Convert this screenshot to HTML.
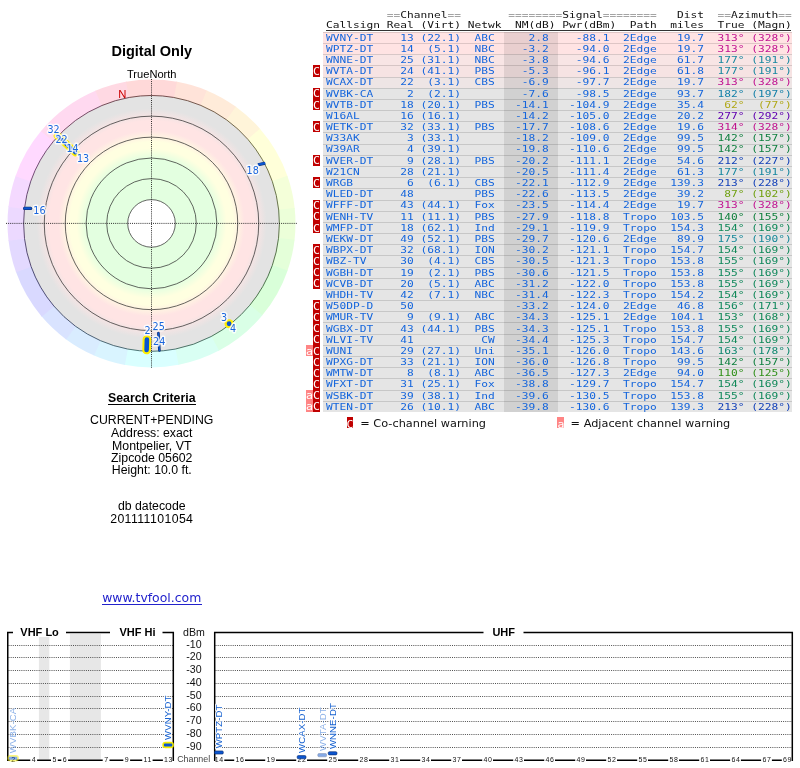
<!DOCTYPE html>
<html><head><meta charset="utf-8"><title>TV Fool - Digital Only</title>
<style>
html,body{margin:0;padding:0;background:#fff;}
body{width:800px;height:768px;position:relative;overflow:hidden;font-family:"Liberation Sans",sans-serif;color:#000;}
.c{position:absolute;text-align:center;white-space:nowrap;left:0;width:303.5px;}
.rb{position:absolute;left:323.4px;width:468.6px;border-top:1px solid rgba(0,0,0,0.13);box-sizing:border-box;}
.t{position:absolute;margin:0;left:326.00px;font-family:"DejaVu Sans Mono","Liberation Mono",monospace;font-size:11.20px;letter-spacing:0.0141px;line-height:13.000px;height:13.000px;white-space:pre;transform-origin:0 0;transform:scale(1,0.855);color:#1465dc;}
.hd{color:#111;}
.mk{position:absolute;width:7.2px;color:#fff;font-family:"DejaVu Sans Mono","Liberation Mono",monospace;font-size:11.5px;text-align:center;overflow:hidden;}
.mk span{display:block;position:relative;top:0.7px;line-height:13px;height:13px;transform-origin:50% 0;transform:scale(1,0.86);}
.mk.l span{top:2.2px;}
.C{background:#c00000;}
.a{background:#ff8585;}
.lg{position:absolute;font-family:"DejaVu Sans","Liberation Sans",sans-serif;font-size:11.3px;white-space:nowrap;color:#111;}
</style></head><body>
<div id="w" style="position:absolute;left:0;top:0;width:800px;height:768px;overflow:hidden;will-change:transform;">
<div class="c" style="top:42.6px;font-size:14.5px;font-weight:bold;">Digital Only</div>
<div class="c" style="top:67.9px;font-size:11.1px;">TrueNorth</div>
<div class="c" style="top:391.3px;font-size:12.3px;font-weight:bold;">Search Criteria</div>
<div style="position:absolute;left:108px;top:404.3px;width:87.5px;height:1.2px;background:#000;"></div>
<div class="c" style="top:413.05px;font-size:12.3px;line-height:14px;">CURRENT+PENDING</div>
<div class="c" style="top:426.30px;font-size:12.3px;line-height:14px;">Address: exact</div>
<div class="c" style="top:438.55px;font-size:12.3px;line-height:14px;">Montpelier, VT</div>
<div class="c" style="top:450.55px;font-size:12.3px;line-height:14px;">Zipcode 05602</div>
<div class="c" style="top:463.05px;font-size:12.3px;line-height:14px;">Height: 10.0 ft.</div>
<div class="c" style="top:498.80px;font-size:12.3px;line-height:14px;">db datecode</div>
<div class="c" style="top:511.80px;font-size:12.3px;line-height:14px;letter-spacing:0.4px;">201111101054</div>
<div class="c" style="top:589.6px;font-family:'DejaVu Sans','Liberation Sans',sans-serif;font-size:12.45px;color:#2222cc;">www.tvfool.com</div>
<div style="position:absolute;left:102.2px;top:603.7px;width:99.5px;height:1px;background:#2222cc;"></div>
<pre class="t hd" style="top:8.93px;">         <span style="color:#8a8a8a">==</span>Channel<span style="color:#8a8a8a">==</span>       <span style="color:#8a8a8a">========</span>Signal<span style="color:#8a8a8a">========</span>   Dist  <span style="color:#8a8a8a">==</span>Azimuth<span style="color:#8a8a8a">==</span></pre>
<pre class="t hd" style="top:19.23px;">Callsign Real (Virt) Netwk  NM(dB) Pwr(dBm)  Path  miles  True (Magn)</pre>
<div style="position:absolute;left:326px;top:29.7px;width:465px;height:1px;background:#333;"></div>
<div class="rb" style="top:31.80px;height:11.23px;background:#ffe3e3;"></div>
<div class="rb" style="top:42.98px;height:11.23px;background:#ffe3e3;"></div>
<div class="rb" style="top:54.16px;height:11.23px;background:#f8e5e5;"></div>
<div class="rb" style="top:65.34px;height:11.23px;background:#f6e3e3;"></div>
<div class="rb" style="top:76.52px;height:11.23px;background:#eee5e5;"></div>
<div class="rb" style="top:87.70px;height:11.23px;background:#e5e5e5;"></div>
<div class="rb" style="top:98.88px;height:11.23px;background:#e5e5e5;"></div>
<div class="rb" style="top:110.06px;height:11.23px;background:#e5e5e5;"></div>
<div class="rb" style="top:121.24px;height:11.23px;background:#e5e5e5;"></div>
<div class="rb" style="top:132.42px;height:11.23px;background:#e5e5e5;"></div>
<div class="rb" style="top:143.60px;height:11.23px;background:#e5e5e5;"></div>
<div class="rb" style="top:154.78px;height:11.23px;background:#e5e5e5;"></div>
<div class="rb" style="top:165.96px;height:11.23px;background:#e5e5e5;"></div>
<div class="rb" style="top:177.14px;height:11.23px;background:#e5e5e5;"></div>
<div class="rb" style="top:188.32px;height:11.23px;background:#e5e5e5;"></div>
<div class="rb" style="top:199.50px;height:11.23px;background:#e5e5e5;"></div>
<div class="rb" style="top:210.68px;height:11.23px;background:#e5e5e5;"></div>
<div class="rb" style="top:221.86px;height:11.23px;background:#e5e5e5;"></div>
<div class="rb" style="top:233.04px;height:11.23px;background:#e5e5e5;"></div>
<div class="rb" style="top:244.22px;height:11.23px;background:#e5e5e5;"></div>
<div class="rb" style="top:255.40px;height:11.23px;background:#e5e5e5;"></div>
<div class="rb" style="top:266.58px;height:11.23px;background:#e5e5e5;"></div>
<div class="rb" style="top:277.76px;height:11.23px;background:#e5e5e5;"></div>
<div class="rb" style="top:288.94px;height:11.23px;background:#e5e5e5;"></div>
<div class="rb" style="top:300.12px;height:11.23px;background:#e5e5e5;"></div>
<div class="rb" style="top:311.30px;height:11.23px;background:#e5e5e5;"></div>
<div class="rb" style="top:322.48px;height:11.23px;background:#e5e5e5;"></div>
<div class="rb" style="top:333.66px;height:11.23px;background:#e5e5e5;"></div>
<div class="rb" style="top:344.84px;height:11.23px;background:#e5e5e5;"></div>
<div class="rb" style="top:356.02px;height:11.23px;background:#e5e5e5;"></div>
<div class="rb" style="top:367.20px;height:11.23px;background:#e5e5e5;"></div>
<div class="rb" style="top:378.38px;height:11.23px;background:#e5e5e5;"></div>
<div class="rb" style="top:389.56px;height:11.23px;background:#e5e5e5;"></div>
<div class="rb" style="top:400.74px;height:11.23px;background:#e5e5e5;"></div>
<div style="position:absolute;left:504px;top:31.80px;width:53.7px;height:380.12px;background:rgba(0,0,0,0.085);"></div>
<pre class="t" style="top:31.58px;">WVNY-DT    13 (22.1)  ABC     2.8    -88.1  2Edge   19.7  <span style="color:#c01090">313° (328°)</span></pre>
<pre class="t" style="top:42.77px;">WPTZ-DT    14  (5.1)  NBC    -3.2    -94.0  2Edge   19.7  <span style="color:#c01090">313° (328°)</span></pre>
<pre class="t" style="top:53.96px;">WNNE-DT    25 (31.1)  NBC    -3.8    -94.6  2Edge   61.7  <span style="color:#1888a0">177° (191°)</span></pre>
<pre class="t" style="top:65.15px;">WVTA-DT    24 (41.1)  PBS    -5.3    -96.1  2Edge   61.8  <span style="color:#1888a0">177° (191°)</span></pre>
<div class="mk C" style="left:312.8px;top:65.34px;height:11.23px;"><span>C</span></div>
<pre class="t" style="top:76.34px;">WCAX-DT    22  (3.1)  CBS    -6.9    -97.7  2Edge   19.7  <span style="color:#c01090">313° (328°)</span></pre>
<pre class="t" style="top:87.53px;">WVBK-CA     2  (2.1)         -7.6    -98.5  2Edge   93.7  <span style="color:#1480a8">182° (197°)</span></pre>
<div class="mk C" style="left:312.8px;top:87.70px;height:11.23px;"><span>C</span></div>
<pre class="t" style="top:98.72px;">WVTB-DT    18 (20.1)  PBS   -14.1   -104.9  2Edge   35.4  <span style="color:#b0a818"> 62°  (77°)</span></pre>
<div class="mk C" style="left:312.8px;top:98.88px;height:11.23px;"><span>C</span></div>
<pre class="t" style="top:109.91px;">W16AL      16 (16.1)        -14.2   -105.0  2Edge   20.2  <span style="color:#6000b0">277° (292°)</span></pre>
<pre class="t" style="top:121.10px;">WETK-DT    32 (33.1)  PBS   -17.7   -108.6  2Edge   19.6  <span style="color:#c0108d">314° (328°)</span></pre>
<div class="mk C" style="left:312.8px;top:121.24px;height:11.23px;"><span>C</span></div>
<pre class="t" style="top:132.29px;">W33AK       3 (33.1)        -18.2   -109.0  2Edge   99.5  <span style="color:#108040">142° (157°)</span></pre>
<pre class="t" style="top:143.48px;">W39AR       4 (39.1)        -19.8   -110.6  2Edge   99.5  <span style="color:#108040">142° (157°)</span></pre>
<pre class="t" style="top:154.67px;">WVER-DT     9 (28.1)  PBS   -20.2   -111.1  2Edge   54.6  <span style="color:#1040b8">212° (227°)</span></pre>
<div class="mk C" style="left:312.8px;top:154.78px;height:11.23px;"><span>C</span></div>
<pre class="t" style="top:165.86px;">W21CN      28 (21.1)        -20.5   -111.4  2Edge   61.3  <span style="color:#1888a0">177° (191°)</span></pre>
<pre class="t" style="top:177.05px;">WRGB        6  (6.1)  CBS   -22.1   -112.9  2Edge  139.3  <span style="color:#113fb8">213° (228°)</span></pre>
<div class="mk C" style="left:312.8px;top:177.14px;height:11.23px;"><span>C</span></div>
<pre class="t" style="top:188.24px;">WLED-DT    48         PBS   -22.6   -113.5  2Edge   39.2  <span style="color:#70a010"> 87° (102°)</span></pre>
<pre class="t" style="top:199.43px;">WFFF-DT    43 (44.1)  Fox   -23.5   -114.4  2Edge   19.7  <span style="color:#c01090">313° (328°)</span></pre>
<div class="mk C" style="left:312.8px;top:199.50px;height:11.23px;"><span>C</span></div>
<pre class="t" style="top:210.62px;">WENH-TV    11 (11.1)  PBS   -27.9   -118.8  Tropo  103.5  <span style="color:#12813e">140° (155°)</span></pre>
<div class="mk C" style="left:312.8px;top:210.68px;height:11.23px;"><span>C</span></div>
<pre class="t" style="top:221.81px;">WMFP-DT    18 (62.1)  Ind   -29.1   -119.9  Tropo  154.3  <span style="color:#108858">154° (169°)</span></pre>
<div class="mk C" style="left:312.8px;top:221.86px;height:11.23px;"><span>C</span></div>
<pre class="t" style="top:233.00px;">WEKW-DT    49 (52.1)  PBS   -29.7   -120.6  2Edge   89.9  <span style="color:#178899">175° (190°)</span></pre>
<pre class="t" style="top:244.19px;">WBPX-DT    32 (68.1)  ION   -30.2   -121.1  Tropo  154.7  <span style="color:#108858">154° (169°)</span></pre>
<div class="mk C" style="left:312.8px;top:244.22px;height:11.23px;"><span>C</span></div>
<pre class="t" style="top:255.38px;">WBZ-TV     30  (4.1)  CBS   -30.5   -121.3  Tropo  153.8  <span style="color:#10885b">155° (169°)</span></pre>
<div class="mk C" style="left:312.8px;top:255.40px;height:11.23px;"><span>C</span></div>
<pre class="t" style="top:266.57px;">WGBH-DT    19  (2.1)  PBS   -30.6   -121.5  Tropo  153.8  <span style="color:#10885b">155° (169°)</span></pre>
<div class="mk C" style="left:312.8px;top:266.58px;height:11.23px;"><span>C</span></div>
<pre class="t" style="top:277.76px;">WCVB-DT    20  (5.1)  ABC   -31.2   -122.0  Tropo  153.8  <span style="color:#10885b">155° (169°)</span></pre>
<div class="mk C" style="left:312.8px;top:277.76px;height:11.23px;"><span>C</span></div>
<pre class="t" style="top:288.95px;">WHDH-TV    42  (7.1)  NBC   -31.4   -122.3  Tropo  154.2  <span style="color:#108858">154° (169°)</span></pre>
<pre class="t" style="top:300.14px;">W50DP-D    50               -33.2   -124.0  2Edge   46.8  <span style="color:#10885d">156° (171°)</span></pre>
<div class="mk C" style="left:312.8px;top:300.12px;height:11.23px;"><span>C</span></div>
<pre class="t" style="top:311.33px;">WMUR-TV     9  (9.1)  ABC   -34.3   -125.1  2Edge  104.1  <span style="color:#108756">153° (168°)</span></pre>
<div class="mk C" style="left:312.8px;top:311.30px;height:11.23px;"><span>C</span></div>
<pre class="t" style="top:322.52px;">WGBX-DT    43 (44.1)  PBS   -34.3   -125.1  Tropo  153.8  <span style="color:#10885b">155° (169°)</span></pre>
<div class="mk C" style="left:312.8px;top:322.48px;height:11.23px;"><span>C</span></div>
<pre class="t" style="top:333.71px;">WLVI-TV    41          CW   -34.4   -125.3  Tropo  154.7  <span style="color:#108858">154° (169°)</span></pre>
<div class="mk C" style="left:312.8px;top:333.66px;height:11.23px;"><span>C</span></div>
<pre class="t" style="top:344.90px;">WUNI       29 (27.1)  Uni   -35.1   -126.0  Tropo  143.6  <span style="color:#108870">163° (178°)</span></pre>
<div class="mk C" style="left:312.8px;top:344.84px;height:11.23px;"><span>C</span></div>
<div class="mk a" style="left:306px;width:6.9px;top:344.84px;height:11.23px;"><span>a</span></div>
<pre class="t" style="top:356.09px;">WPXG-DT    33 (21.1)  ION   -36.0   -126.8  Tropo   99.5  <span style="color:#108040">142° (157°)</span></pre>
<div class="mk C" style="left:312.8px;top:356.02px;height:11.23px;"><span>C</span></div>
<pre class="t" style="top:367.28px;">WMTW-DT     8  (8.1)  ABC   -36.5   -127.3  2Edge   94.0  <span style="color:#30901a">110° (125°)</span></pre>
<div class="mk C" style="left:312.8px;top:367.20px;height:11.23px;"><span>C</span></div>
<pre class="t" style="top:378.47px;">WFXT-DT    31 (25.1)  Fox   -38.8   -129.7  Tropo  154.7  <span style="color:#108858">154° (169°)</span></pre>
<div class="mk C" style="left:312.8px;top:378.38px;height:11.23px;"><span>C</span></div>
<pre class="t" style="top:389.66px;">WSBK-DT    39 (38.1)  Ind   -39.6   -130.5  Tropo  153.8  <span style="color:#10885b">155° (169°)</span></pre>
<div class="mk C" style="left:312.8px;top:389.56px;height:11.23px;"><span>C</span></div>
<div class="mk a" style="left:306px;width:6.9px;top:389.56px;height:11.23px;"><span>a</span></div>
<pre class="t" style="top:400.85px;">WTEN-DT    26 (10.1)  ABC   -39.8   -130.6  Tropo  139.3  <span style="color:#113fb8">213° (228°)</span></pre>
<div class="mk C" style="left:312.8px;top:400.74px;height:11.23px;"><span>C</span></div>
<div class="mk a" style="left:306px;width:6.9px;top:400.74px;height:11.23px;"><span>a</span></div>
<div class="mk C l" style="left:346.5px;top:416.5px;height:11px;width:6.8px;"><span>C</span></div>
<div class="lg" style="left:360.3px;top:416.8px;">= Co-channel warning</div>
<div class="mk a l" style="left:557.4px;top:416.5px;height:11px;width:6.8px;"><span>a</span></div>
<div class="lg" style="left:570.6px;top:416.8px;">= Adjacent channel warning</div>
<svg style="position:absolute;left:0;top:0;" width="304" height="380" viewBox="0 0 304 380">
<defs><radialGradient id="zg" gradientUnits="userSpaceOnUse" cx="151.5" cy="223.4" r="128">
<stop offset="0" stop-color="#e3ffe0"/><stop offset="0.5039" stop-color="#e3ffe0"/>
<stop offset="0.5859" stop-color="#ffffe0"/><stop offset="0.6367" stop-color="#ffffe0"/>
<stop offset="0.7266" stop-color="#ffe4e4"/><stop offset="0.8008" stop-color="#ffe4e4"/>
<stop offset="0.8984" stop-color="#e3e3e3"/><stop offset="1" stop-color="#e3e3e3"/>
</radialGradient></defs>
<path d="M151.5 223.4 L176.13 81.52 A144.0 144.0 0 0 1 207.42 90.70 Z" fill="#ffe3d9"/>
<path d="M151.5 223.4 L206.72 90.41 A144.0 144.0 0 0 1 236.45 107.12 Z" fill="#ffebd9"/>
<path d="M151.5 223.4 L235.84 106.68 A144.0 144.0 0 0 1 260.43 129.21 Z" fill="#fff4d9"/>
<path d="M151.5 223.4 L259.93 128.64 A144.0 144.0 0 0 1 287.61 176.40 Z" fill="#ffffd9"/>
<path d="M151.5 223.4 L287.37 175.69 A144.0 144.0 0 0 1 294.75 208.72 Z" fill="#f4ffd9"/>
<path d="M151.5 223.4 L294.67 207.97 A144.0 144.0 0 0 1 294.47 240.57 Z" fill="#ecffd9"/>
<path d="M151.5 223.4 L294.56 239.83 A144.0 144.0 0 0 1 287.37 271.11 Z" fill="#e4ffd9"/>
<path d="M151.5 223.4 L287.61 270.40 A144.0 144.0 0 0 1 261.89 315.87 Z" fill="#d9ffd9"/>
<path d="M151.5 223.4 L262.37 315.29 A144.0 144.0 0 0 1 218.33 350.96 Z" fill="#d9ffe6"/>
<path d="M151.5 223.4 L218.99 350.60 A144.0 144.0 0 0 1 177.87 364.97 Z" fill="#d9fff3"/>
<path d="M151.5 223.4 L178.61 364.83 A144.0 144.0 0 0 1 124.15 364.78 Z" fill="#d9ffff"/>
<path d="M151.5 223.4 L124.89 364.92 A144.0 144.0 0 0 1 93.50 355.20 Z" fill="#d9f4ff"/>
<path d="M151.5 223.4 L94.20 355.51 A144.0 144.0 0 0 1 65.54 338.93 Z" fill="#d9ecff"/>
<path d="M151.5 223.4 L66.15 339.38 A144.0 144.0 0 0 1 41.27 316.06 Z" fill="#d9e3ff"/>
<path d="M151.5 223.4 L41.76 316.63 A144.0 144.0 0 0 1 15.80 271.59 Z" fill="#d9d9ff"/>
<path d="M151.5 223.4 L16.06 272.30 A144.0 144.0 0 0 1 8.47 240.08 Z" fill="#e3d9ff"/>
<path d="M151.5 223.4 L8.56 240.82 A144.0 144.0 0 0 1 8.53 206.23 Z" fill="#ecd9ff"/>
<path d="M151.5 223.4 L8.44 206.97 A144.0 144.0 0 0 1 15.72 175.45 Z" fill="#f4d9ff"/>
<path d="M151.5 223.4 L15.47 176.16 A144.0 144.0 0 0 1 41.43 130.55 Z" fill="#ffd9ff"/>
<path d="M151.5 223.4 L40.95 131.13 A144.0 144.0 0 0 1 96.05 90.51 Z" fill="#ffd9f0"/>
<path d="M151.5 223.4 L95.35 90.80 A144.0 144.0 0 0 1 126.87 81.52 Z" fill="#ffd9e3"/>
<path d="M151.5 223.4 L126.12 81.65 A144.0 144.0 0 0 1 176.88 81.65 Z" fill="#ffd9d9"/>
<circle cx="151.5" cy="223.4" r="128" fill="url(#zg)"/>
<circle cx="151.5" cy="223.4" r="23.8" fill="#fff"/>
<path d="M173.71 97.44 A127.9 127.9 0 0 1 200.86 105.41" fill="none" stroke="#573427" stroke-width="0.8"/>
<path d="M200.86 105.41 A127.9 127.9 0 0 1 226.68 119.93" fill="none" stroke="#573e27" stroke-width="0.8"/>
<path d="M226.68 119.93 A127.9 127.9 0 0 1 248.03 139.49" fill="none" stroke="#574927" stroke-width="0.8"/>
<path d="M248.03 139.49 A127.9 127.9 0 0 1 272.29 181.34" fill="none" stroke="#575727" stroke-width="0.8"/>
<path d="M272.29 181.34 A127.9 127.9 0 0 1 278.70 210.03" fill="none" stroke="#495727" stroke-width="0.8"/>
<path d="M278.70 210.03 A127.9 127.9 0 0 1 278.53 238.32" fill="none" stroke="#3f5727" stroke-width="0.8"/>
<path d="M278.53 238.32 A127.9 127.9 0 0 1 272.29 265.46" fill="none" stroke="#355727" stroke-width="0.8"/>
<path d="M272.29 265.46 A127.9 127.9 0 0 1 249.76 305.27" fill="none" stroke="#275727" stroke-width="0.8"/>
<path d="M249.76 305.27 A127.9 127.9 0 0 1 211.15 336.54" fill="none" stroke="#275738" stroke-width="0.8"/>
<path d="M211.15 336.54 A127.9 127.9 0 0 1 175.25 349.08" fill="none" stroke="#275747" stroke-width="0.8"/>
<path d="M175.25 349.08 A127.9 127.9 0 0 1 127.53 349.03" fill="none" stroke="#275757" stroke-width="0.8"/>
<path d="M127.53 349.03 A127.9 127.9 0 0 1 100.30 340.60" fill="none" stroke="#274957" stroke-width="0.8"/>
<path d="M100.30 340.60 A127.9 127.9 0 0 1 75.42 326.21" fill="none" stroke="#273f57" stroke-width="0.8"/>
<path d="M75.42 326.21 A127.9 127.9 0 0 1 53.81 305.95" fill="none" stroke="#273457" stroke-width="0.8"/>
<path d="M53.81 305.95 A127.9 127.9 0 0 1 31.09 266.51" fill="none" stroke="#272757" stroke-width="0.8"/>
<path d="M31.09 266.51 A127.9 127.9 0 0 1 24.50 238.54" fill="none" stroke="#342757" stroke-width="0.8"/>
<path d="M24.50 238.54 A127.9 127.9 0 0 1 24.47 208.48" fill="none" stroke="#3f2757" stroke-width="0.8"/>
<path d="M24.47 208.48 A127.9 127.9 0 0 1 30.79 181.13" fill="none" stroke="#492757" stroke-width="0.8"/>
<path d="M30.79 181.13 A127.9 127.9 0 0 1 53.52 141.19" fill="none" stroke="#562757" stroke-width="0.8"/>
<path d="M53.52 141.19 A127.9 127.9 0 0 1 101.94 105.49" fill="none" stroke="#572744" stroke-width="0.8"/>
<path d="M101.94 105.49 A127.9 127.9 0 0 1 129.29 97.44" fill="none" stroke="#572734" stroke-width="0.8"/>
<path d="M129.29 97.44 A127.9 127.9 0 0 1 173.71 97.44" fill="none" stroke="#572727" stroke-width="0.8"/>
<circle cx="151.5" cy="223.4" r="23.80" fill="none" stroke="#2a2a2a" stroke-width="0.72"/>
<circle cx="151.5" cy="223.4" r="44.80" fill="none" stroke="#2a2a2a" stroke-width="0.72"/>
<circle cx="151.5" cy="223.4" r="65.40" fill="none" stroke="#2a2a2a" stroke-width="0.72"/>
<circle cx="151.5" cy="223.4" r="86.25" fill="none" stroke="#2a2a2a" stroke-width="0.72"/>
<circle cx="151.5" cy="223.4" r="107.25" fill="none" stroke="#2a2a2a" stroke-width="0.72"/>
<path d="M6 223.4 H297.5 M151.5 79 V368" stroke="#1a1a1a" stroke-width="0.9" stroke-dasharray="1 1.1" fill="none"/>
<line x1="72.37" y1="146.99" x2="59.42" y2="134.48" stroke="#0a2a6a" stroke-width="2.6" stroke-linecap="round"/>
<line x1="72.37" y1="146.99" x2="59.42" y2="134.48" stroke="#0b55cf" stroke-width="1.6" stroke-linecap="round"/>
<line x1="75.44" y1="152.47" x2="57.52" y2="135.76" stroke="#ffee00" stroke-width="7.6" stroke-linecap="round"/>
<line x1="75.44" y1="152.47" x2="57.52" y2="135.76" stroke="#0b55cf" stroke-width="4.0" stroke-linecap="round"/>
<line x1="24.6" y1="208.4" x2="30.6" y2="208.4" stroke="#0a2a6a" stroke-width="3.2" stroke-linecap="round"/><line x1="24.6" y1="208.4" x2="30.6" y2="208.4" stroke="#0b55cf" stroke-width="2.2" stroke-linecap="round"/>
<line x1="258" y1="164.7" x2="265.2" y2="163.2" stroke="#0a2a6a" stroke-width="3" stroke-linecap="butt"/><line x1="258" y1="164.7" x2="265.2" y2="163.2" stroke="#0b55cf" stroke-width="2.2"/>
<circle cx="229.1" cy="323.75" r="4.6" fill="#ffee00"/><circle cx="229.1" cy="323.75" r="2.4" fill="#0b55cf"/>
<line x1="158.4" y1="333" x2="159.4" y2="350.5" stroke="#0a2a6a" stroke-width="2.6" stroke-linecap="round"/><line x1="158.4" y1="333" x2="159.4" y2="350.5" stroke="#0b55cf" stroke-width="1.5" stroke-linecap="round"/>
<line x1="146.9" y1="339.5" x2="146.6" y2="350" stroke="#ffee00" stroke-width="8.6" stroke-linecap="round"/><line x1="146.9" y1="339.5" x2="146.6" y2="350" stroke="#0b55cf" stroke-width="4.6" stroke-linecap="round"/>
<g font-family="'DejaVu Sans','Liberation Sans',sans-serif" font-size="9.6" fill="#1a66dd" text-anchor="middle" stroke="#fff" stroke-opacity="0.8" stroke-width="3" stroke-linejoin="round" paint-order="stroke">
<text x="53.5" y="132.5">32</text>
<text x="61.5" y="142.5">22</text>
<text x="72.5" y="151.5">14</text>
<text x="83.0" y="161.5">13</text>
<text x="39.4" y="213.6">16</text>
<text x="252.7" y="173.9">18</text>
<text x="224.0" y="320.5">3</text>
<text x="233.0" y="332.0">4</text>
<text x="147.6" y="333.5">2</text>
<text x="158.7" y="330.0">25</text>
<text x="159.2" y="344.5">24</text>
</g>
<text x="122.3" y="98" font-family="'Liberation Sans',sans-serif" font-size="11.3" fill="#cc0000" text-anchor="middle">N</text>
</svg>
<svg style="position:absolute;left:0;top:620px;" width="800" height="148" viewBox="0 620 800 148">
<rect x="38.9" y="637" width="10.4" height="122.5" fill="#e7e7e7"/><rect x="69.9" y="634" width="31" height="125.5" fill="#e7e7e7"/>
<path d="M8.5 645.50 H173 M215.5 645.50 H792 M8.5 657.50 H173 M215.5 657.50 H792 M8.5 670.50 H173 M215.5 670.50 H792 M8.5 683.50 H173 M215.5 683.50 H792 M8.5 696.50 H173 M215.5 696.50 H792 M8.5 708.50 H173 M215.5 708.50 H792 M8.5 721.50 H173 M215.5 721.50 H792 M8.5 734.50 H173 M215.5 734.50 H792 M8.5 747.50 H173 M215.5 747.50 H792 " stroke="#505050" stroke-width="1" stroke-dasharray="1 1.15" fill="none"/>
<g stroke="#000" stroke-width="1.5" fill="none">
<path d="M7.75 761.0 V632.5 H13 M66 632.5 H110 M162.5 632.5 H173.3 V761.0"/>
<path d="M214.7 761.0 V632.5 H483.5 M523.5 632.5 H792.3 V761.0"/>
</g>
<path d="M7.0 760.3 H9.7 M16.5 760.3 H30.3 M37.1 760.3 H51.0 M57.8 760.3 H61.3 M68.1 760.3 H102.7 M109.5 760.3 H123.3 M130.1 760.3 H142.2 M152.6 760.3 H162.9 M173.3 760.3 H174.0 M224.3 760.3 H234.2 M245.0 760.3 H265.2 M276.0 760.3 H296.2 M307.0 760.3 H327.2 M338.0 760.3 H358.2 M369.0 760.3 H389.2 M400.0 760.3 H420.2 M431.0 760.3 H451.2 M462.0 760.3 H482.2 M493.0 760.3 H513.2 M524.0 760.3 H544.2 M555.0 760.3 H575.2 M586.0 760.3 H606.2 M617.0 760.3 H637.2 M648.0 760.3 H668.2 M679.0 760.3 H699.2 M710.0 760.3 H730.1 M740.9 760.3 H761.1 M771.9 760.3 H781.8 M792.6 760.3 H793.0 " stroke="#000" stroke-width="1.4" fill="none"/>
<g font-family="'Liberation Sans',sans-serif" font-size="7" fill="#111" text-anchor="middle" letter-spacing="0.6">
<text x="13.4" y="762.1">2</text><text x="34.1" y="762.1">4</text><text x="54.7" y="762.1">5</text><text x="65.1" y="762.1">6</text><text x="106.4" y="762.1">7</text><text x="127.1" y="762.1">9</text><text x="147.7" y="762.1">11</text><text x="168.4" y="762.1">13</text><text x="219.2" y="762.1">14</text><text x="239.9" y="762.1">16</text><text x="270.9" y="762.1">19</text><text x="301.9" y="762.1">22</text><text x="332.9" y="762.1">25</text><text x="363.9" y="762.1">28</text><text x="394.9" y="762.1">31</text><text x="425.9" y="762.1">34</text><text x="456.9" y="762.1">37</text><text x="487.9" y="762.1">40</text><text x="518.9" y="762.1">43</text><text x="549.9" y="762.1">46</text><text x="580.9" y="762.1">49</text><text x="611.9" y="762.1">52</text><text x="642.9" y="762.1">55</text><text x="673.9" y="762.1">58</text><text x="704.9" y="762.1">61</text><text x="735.9" y="762.1">64</text><text x="766.9" y="762.1">67</text><text x="787.6" y="762.1">69</text>
</g>
<g font-family="'Liberation Sans',sans-serif" font-size="11" font-weight="bold" fill="#000" text-anchor="middle">
<text x="39.6" y="636.4">VHF Lo</text><text x="137.5" y="636.4">VHF Hi</text><text x="503.7" y="636.4">UHF</text>
</g>
<g font-family="'Liberation Sans',sans-serif" font-size="10.6" fill="#111" text-anchor="middle">
<text x="194" y="636.3">dBm</text><text x="194" y="648.3">-10</text><text x="194" y="660.3">-20</text><text x="194" y="673.3">-30</text><text x="194" y="686.3">-40</text><text x="194" y="699.3">-50</text><text x="194" y="711.3">-60</text><text x="194" y="724.3">-70</text><text x="194" y="737.3">-80</text><text x="194" y="750.3">-90</text>
<text x="193.7" y="761.8" font-size="8.9" fill="#444">Channel</text>
</g>
<g opacity="0.5"><rect x="7.3" y="755.0" width="11.6" height="6.4" rx="3.2" fill="#f4ec00"/><rect x="8.9" y="756.7" width="8.4" height="3" rx="1" fill="#0b55cf"/><text transform="translate(16.4 753.2) rotate(-90)" font-family="'Liberation Sans',sans-serif" font-size="9.6" fill="#1560d0" letter-spacing="0.1" stroke="#fff" stroke-opacity="0.85" stroke-width="2" stroke-linejoin="round" paint-order="stroke">WVBK-CA</text></g>
<g><rect x="162.3" y="741.8" width="11.6" height="6.4" rx="3.2" fill="#f4ec00"/><rect x="163.9" y="743.5" width="8.4" height="3" rx="1" fill="#0b55cf"/><text transform="translate(171.4 740.0) rotate(-90)" font-family="'Liberation Sans',sans-serif" font-size="9.6" fill="#1560d0" letter-spacing="0.1" stroke="#fff" stroke-opacity="0.85" stroke-width="2" stroke-linejoin="round" paint-order="stroke">WVNY-DT</text></g>
<g><rect x="214.5" y="750.9" width="8.8" height="3.2" rx="1.2" fill="#0b55cf" stroke="#0a2a6a" stroke-width="0.6"/><text transform="translate(222.2 748.3) rotate(-90)" font-family="'Liberation Sans',sans-serif" font-size="9.6" fill="#1560d0" letter-spacing="0.1" stroke="#fff" stroke-opacity="0.85" stroke-width="2" stroke-linejoin="round" paint-order="stroke">WPTZ-DT</text></g>
<g><rect x="297.2" y="755.6" width="8.8" height="3.2" rx="1.2" fill="#0b55cf" stroke="#0a2a6a" stroke-width="0.6"/><text transform="translate(304.9 753.0) rotate(-90)" font-family="'Liberation Sans',sans-serif" font-size="9.6" fill="#1560d0" letter-spacing="0.1" stroke="#fff" stroke-opacity="0.85" stroke-width="2" stroke-linejoin="round" paint-order="stroke">WCAX-DT</text></g>
<g opacity="0.5"><rect x="317.8" y="753.6" width="8.8" height="3.2" rx="1.2" fill="#0b55cf" stroke="#0a2a6a" stroke-width="0.6"/><text transform="translate(325.5 751.0) rotate(-90)" font-family="'Liberation Sans',sans-serif" font-size="9.6" fill="#1560d0" letter-spacing="0.1" stroke="#fff" stroke-opacity="0.85" stroke-width="2" stroke-linejoin="round" paint-order="stroke">WVTA-DT</text></g>
<g><rect x="328.2" y="751.7" width="8.8" height="3.2" rx="1.2" fill="#0b55cf" stroke="#0a2a6a" stroke-width="0.6"/><text transform="translate(335.9 749.1) rotate(-90)" font-family="'Liberation Sans',sans-serif" font-size="9.6" fill="#1560d0" letter-spacing="0.1" stroke="#fff" stroke-opacity="0.85" stroke-width="2" stroke-linejoin="round" paint-order="stroke">WNNE-DT</text></g>
</svg>
</div></body></html>
